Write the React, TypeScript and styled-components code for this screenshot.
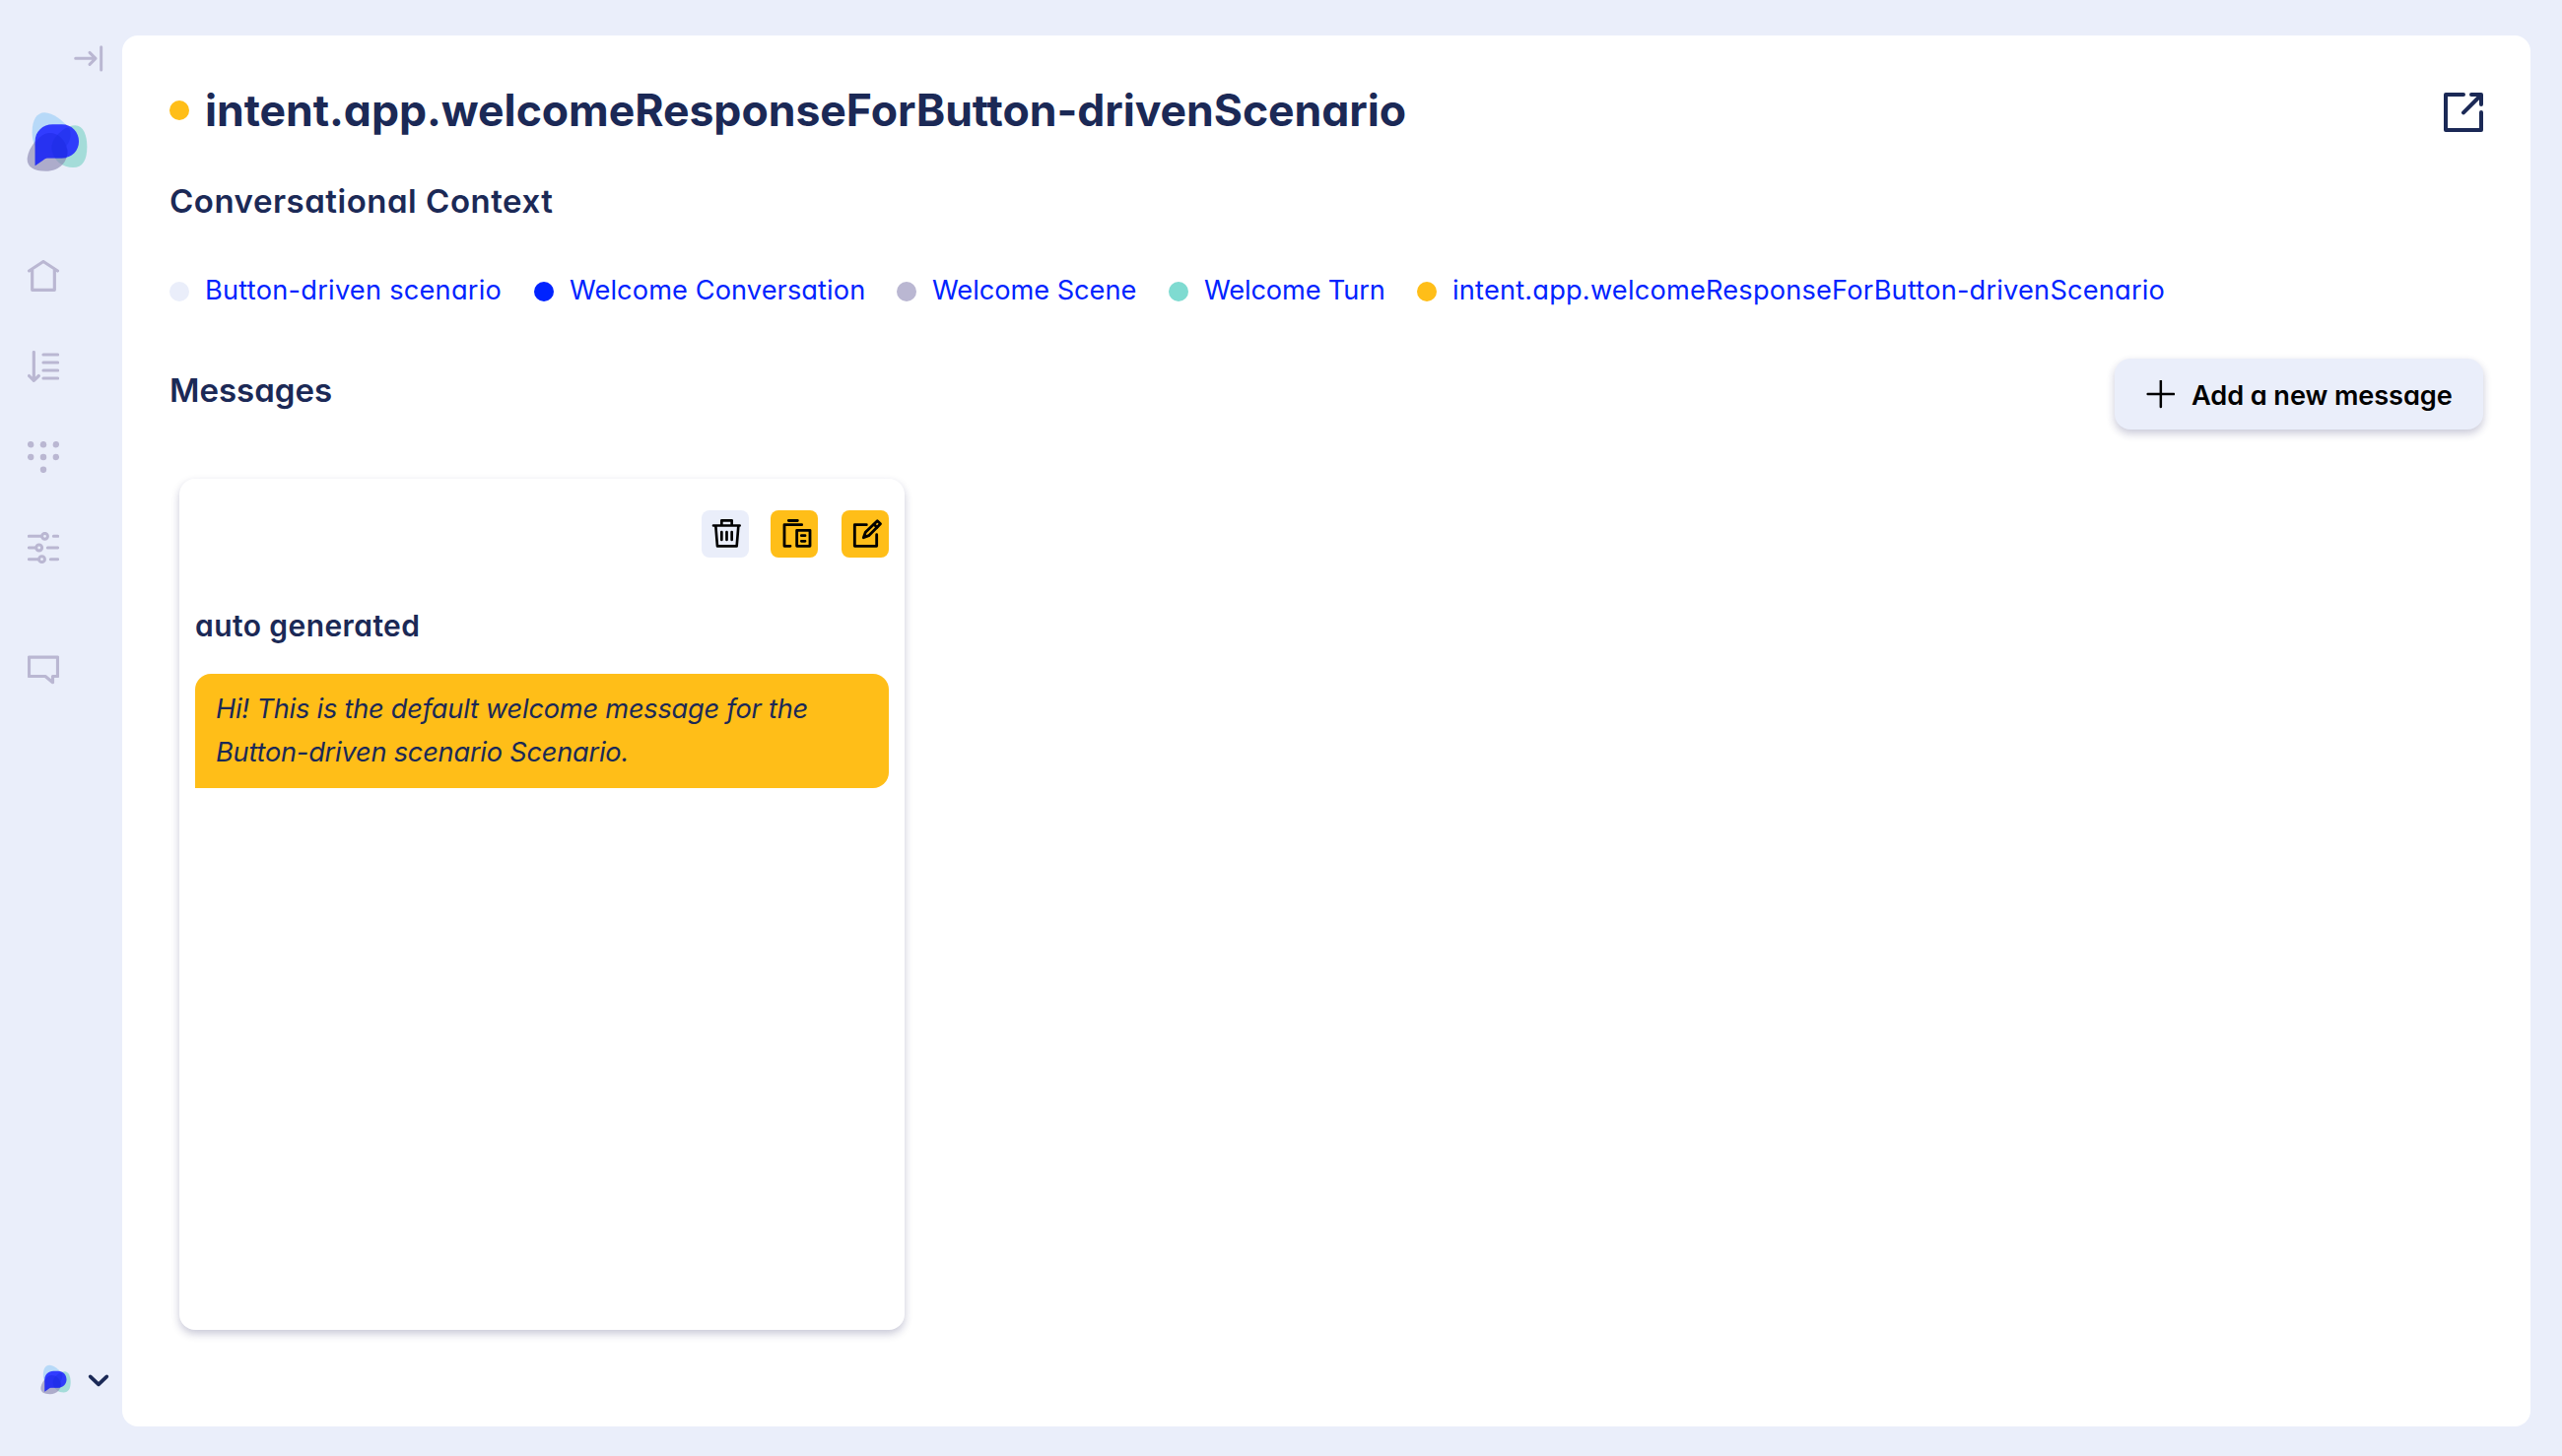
import React from "react";
import styled, { createGlobalStyle } from "styled-components";

const color = {
  mist: "#eaeefa",
  navy: "#1b2956",
  blue: "#0023ff",
  lilac: "#bab7d2",
  teal: "#7fdbd1",
  amber: "#ffbe18",
};

const GlobalStyle = createGlobalStyle`
  *, *::before, *::after { box-sizing: border-box; }
  body {
    margin: 0;
    background: ${color.mist};
    color: ${color.navy};
    font-family: Inter, "Liberation Sans", sans-serif;
    font-feature-settings: "cv11";
  }
  svg { display: block; }
`;

const Shell = styled.div`
  display: flex;
  height: 100vh;
  min-height: 1478px;
  padding: 36px 32px 30px 0;
`;

const Sidebar = styled.aside`
  flex: 0 0 124px;
  display: flex;
  flex-direction: column;
  padding-bottom: 32px;
`;

const CollapseButton = styled.div`
  display: flex;
  justify-content: flex-end;
  padding: 9px 18px 0 0;
`;

const LogoSlot = styled.div`
  padding: 40px 0 0 27px;
`;

const Nav = styled.nav`
  display: flex;
  flex-direction: column;
  gap: 60px;
  padding: 89px 0 0 28px;
`;

const NavItem = styled.a<{ $separated?: boolean }>`
  display: block;
  width: 32px;
  height: 32px;
  margin-top: ${(p) => (p.$separated ? "32px" : "0")};
`;

const Account = styled.div`
  display: flex;
  align-items: center;
  gap: 17px;
  margin-top: auto;
  padding-left: 41px;
`;

const Panel = styled.main`
  flex: 1;
  min-width: 0;
  padding: 46px 48px;
  background: #fff;
  border-radius: 16px;
`;

const SpreadRow = styled.header<{ $top: number; $height: number }>`
  display: flex;
  align-items: center;
  justify-content: space-between;
  height: ${(p) => p.$height}px;
  margin-top: ${(p) => p.$top}px;
`;

const TitleGroup = styled.div`
  display: flex;
  align-items: center;
  gap: 16px;
`;

const Dot = styled.span<{ $color: string }>`
  flex: none;
  width: 20px;
  height: 20px;
  border-radius: 50%;
  background: ${(p) => p.$color};
`;

const PageTitle = styled.h1`
  margin: 0;
  font-size: 44.6px;
  font-weight: 700;
  line-height: 60px;
  letter-spacing: -0.06px;
  white-space: nowrap;
`;

const ExternalLink = styled.a`
  padding-top: 4px;
`;

const SectionTitle = styled.h2<{ $top?: number; $bottom?: number; $spacing: string }>`
  margin: ${(p) => p.$top ?? 0}px 0 0;
  padding-bottom: ${(p) => p.$bottom ?? 0}px;
  font-size: 33px;
  font-weight: 600;
  line-height: 44px;
  letter-spacing: ${(p) => p.$spacing};
`;

const Crumbs = styled.nav`
  display: flex;
  align-items: center;
  gap: 32px;
  height: 36px;
  margin-top: 52px;
`;

const Crumb = styled.div<{ $width: number }>`
  display: flex;
  align-items: center;
  gap: 16px;
  width: ${(p) => p.$width}px;
`;

const CrumbLink = styled.a<{ $spacing: string }>`
  padding-bottom: 2px;
  color: ${color.blue};
  font-size: 27.2px;
  line-height: 36px;
  letter-spacing: ${(p) => p.$spacing};
  white-space: nowrap;
`;

const AddButton = styled.button`
  display: flex;
  align-items: center;
  gap: 17px;
  width: 374px;
  height: 72px;
  padding: 0 0 0 32px;
  border: 0;
  border-radius: 16px;
  background: ${color.mist};
  box-shadow: 0 4px 8px rgba(27, 27, 86, 0.24);
  color: #000;
  font-family: inherit;
  font-feature-settings: inherit;
`;

const AddLabel = styled.span`
  padding-top: 4px;
  font-size: 27.2px;
  font-weight: 600;
  line-height: 36px;
  letter-spacing: -0.1px;
  white-space: nowrap;
`;

const Card = styled.article`
  width: 736px;
  height: 864px;
  margin: 50px 0 0 10px;
  padding: 32px 16px;
  border-radius: 16px;
  background: #fff;
  box-shadow: 0 4px 8px rgba(27, 27, 86, 0.24);
`;

const CardActions = styled.div`
  display: flex;
  justify-content: flex-end;
  gap: 24px;
`;

const ActionButton = styled.button<{ $tone: string; $pull?: number }>`
  width: 48px;
  height: 48px;
  margin: 0 ${(p) => -(p.$pull ?? 0)}px 0 0;
  padding: 0;
  border: 0;
  border-radius: 8px;
  background: ${(p) => p.$tone};
`;

const CardTitle = styled.h3`
  margin: 48px 0 28px;
  font-size: 30px;
  font-weight: 600;
  line-height: 42px;
  letter-spacing: 0.42px;
`;

const Bubble = styled.p`
  height: 116px;
  margin: 0;
  padding: 14px 20px 14px 21px;
  border-radius: 16px 16px 16px 0;
  background: ${color.amber};
  font-size: 27.2px;
  font-style: italic;
  line-height: 44px;
  letter-spacing: -0.22px;
`;

const Glyph = styled.svg<{ $stroke: string; $weight: number }>`
  fill: none;
  stroke: ${(p) => p.$stroke};
  stroke-width: ${(p) => p.$weight};
  stroke-linecap: round;
  stroke-linejoin: round;
`;

function Logo({ size }: { size: number }) {
  return (
    <svg width={size} height={size} viewBox="82 280 187 183">
      <path fill="#b7d9f8" d="M99 342C99 305 113 282 137 282C163 282 193 308 208 325C222 345 218 370 202 386C180 407 137 408 116 394C104 385 99 364 99 342Z" />
      <path fill="#7fd3c8" fillOpacity=".66" d="M230 321C256 321 267 352 267 387C267 426 254 450 224 450C193 450 163 429 159 394C157 370 172 351 195 334C206 326 218 321 230 321Z" />
      <path fill="#8a86b0" fillOpacity=".64" d="M152 344C180 344 201 366 206 393C211 429 185 461 140 461C104 461 84 448 84 425C84 396 118 344 152 344Z" />
      <path fill="#1f26ff" fillOpacity=".88" d="M108 445V370C108 340 131 318 162 318H190C221 318 242 342 242 370C242 398 221 421 190 421H149C142 421 138 423 133 427Z" />
      <path fill="#1a2ae0" fillOpacity=".32" d="M110 375C122 355 137 344 152 344C180 344 201 366 206 393C208 405 207 413 203 421H149C142 421 138 423 133 427L108 445V378Z" />
      <path fill="#1a2ae0" fillOpacity=".32" d="M213 331C219 345 218 368 202 386L206 393C208 405 207 413 203 421H170C164 413 160 404 159 394C157 370 172 351 195 334C201 330 208 326 213 331Z" />
    </svg>
  );
}

const CollapseIcon = () => (
  <Glyph $stroke={color.lilac} $weight={9} width={31} height={28} viewBox="225 75 93 84">
    <path d="M230 118H291M273 100L291 118L273 136M308 83V153" />
  </Glyph>
);

const HomeIcon = () => (
  <Glyph $stroke={color.lilac} $weight={9.5} width={32} height={32} viewBox="84 72 96 96">
    <path d="M88.500 105L132 76.500L175.500 105M98 102V163H166V102" />
  </Glyph>
);

const SortIcon = () => (
  <Glyph $stroke={color.lilac} $weight={9.5} width={32} height={32} viewBox="84 348 96 96">
    <path d="M103 352.500V438M88.500 424.500L103 439L118 424.500M132 360H175.500M132 384H175.500M132 408H175.500M132 432H175.500" />
  </Glyph>
);

const DotsIcon = () => (
  <svg width={32} height={32} viewBox="84 624 96 96" fill={color.lilac}>
    {[[93.5, 633.5], [132, 633.5], [170.5, 633.5], [93.5, 672], [132, 672], [170.5, 672], [132, 710.5]].map(([x, y]) => (
      <circle key={`${x}-${y}`} cx={x} cy={y} r={9.7} />
    ))}
  </svg>
);

const SlidersIcon = () => (
  <Glyph $stroke={color.lilac} $weight={9} width={32} height={32} viewBox="84 180 96 96">
    <path d="M88 193H127M163 193H176M88 228H109M145 228H176M88 263H118M154 263H176" />
    <circle cx={136.500} cy={193} r={8.800} />
    <circle cx={119} cy={228} r={8.800} />
    <circle cx={127.500} cy={263} r={8.800} />
  </Glyph>
);

const ChatIcon = () => (
  <Glyph $stroke={color.lilac} $weight={9.5} width={32} height={32} viewBox="84 552 96 96">
    <path d="M88.500 561.500H175.500V619.500H160.500V638L138 619.500H88.500Z" />
  </Glyph>
);

const ChevronIcon = () => (
  <Glyph $stroke={color.navy} $weight={11} width={22} height={16} viewBox="267 98 66 48">
    <path d="M275 111L300 135L325 111" />
  </Glyph>
);

const ExternalIcon = () => (
  <Glyph $stroke={color.navy} $weight={12} width={40} height={40} viewBox="1080 223 120 120">
    <path d="M1140 229H1086V337H1194V283M1164 229H1194V259M1140 284L1192 232" />
  </Glyph>
);

const PlusIcon = () => (
  <Glyph $stroke="#000" $weight={7.5} width={29} height={29} viewBox="175 1098 87 87">
    <path d="M180 1140H259.500M219.500 1100V1179" />
  </Glyph>
);

const TrashIcon = () => (
  <Glyph $stroke="#000" $weight={8} width={48} height={48} viewBox="66 54 144 144">
    <path d="M102 100.500H182M127 99V85H158V99M109 102L114 163H173L178 102M127 120V144M142.500 120V144M158 120V144" />
  </Glyph>
);

const CopyIcon = () => (
  <Glyph $stroke="#000" $weight={8.5} width={48} height={48} viewBox="276 54 144 144">
    <path d="M331 85.500H358M371 98H318V163H336M356 115H396V163H356ZM370 131H381M370 148H381" />
  </Glyph>
);

const EditIcon = () => (
  <Glyph $stroke="#000" $weight={8.5} width={48} height={48} viewBox="492 54 144 144">
    <path d="M568 98H532V163H599V128" />
    <path d="M601 86L610.500 95L575 131L559 137L565 121Z" />
    <path d="M591 97L600 106" />
  </Glyph>
);

const crumbs = [
  { label: "Button-driven scenario", dot: color.mist, width: 338, spacing: "0.24px" },
  { label: "Welcome Conversation", dot: color.blue, width: 336, spacing: "0.09px" },
  { label: "Welcome Scene", dot: color.lilac, width: 244, spacing: "-0.04px" },
  { label: "Welcome Turn", dot: color.teal, width: 220, spacing: "-0.14px" },
  { label: "intent.app.welcomeResponseForButton-drivenScenario", dot: color.amber, width: 760, spacing: "0.2px" },
];

export default function App() {
  return (
    <>
      <GlobalStyle />
      <Shell>
        <Sidebar>
          <CollapseButton>
            <CollapseIcon />
          </CollapseButton>
          <LogoSlot>
            <Logo size={62} />
          </LogoSlot>
          <Nav>
            <NavItem><HomeIcon /></NavItem>
            <NavItem><SortIcon /></NavItem>
            <NavItem><DotsIcon /></NavItem>
            <NavItem><SlidersIcon /></NavItem>
            <NavItem $separated><ChatIcon /></NavItem>
          </Nav>
          <Account>
            <Logo size={31} />
            <ChevronIcon />
          </Account>
        </Sidebar>
        <Panel>
          <SpreadRow $top={0} $height={60}>
            <TitleGroup>
              <Dot $color={color.amber} />
              <PageTitle>intent.app.welcomeResponseForButton-drivenScenario</PageTitle>
            </TitleGroup>
            <ExternalLink><ExternalIcon /></ExternalLink>
          </SpreadRow>
          <SectionTitle $top={40} $spacing="0.52px">Conversational Context</SectionTitle>
          <Crumbs>
            {crumbs.map((c) => (
              <Crumb key={c.label} $width={c.width}>
                <Dot $color={c.dot} />
                <CrumbLink $spacing={c.spacing}>{c.label}</CrumbLink>
              </Crumb>
            ))}
          </Crumbs>
          <SpreadRow $top={50} $height={72}>
            <SectionTitle $bottom={8} $spacing="0px">Messages</SectionTitle>
            <AddButton>
              <PlusIcon />
              <AddLabel>Add a new message</AddLabel>
            </AddButton>
          </SpreadRow>
          <Card>
            <CardActions>
              <ActionButton $tone={color.mist} $pull={2}><TrashIcon /></ActionButton>
              <ActionButton $tone={color.amber}><CopyIcon /></ActionButton>
              <ActionButton $tone={color.amber}><EditIcon /></ActionButton>
            </CardActions>
            <CardTitle>auto generated</CardTitle>
            <Bubble>
              Hi! This is the default welcome message for the Button-driven scenario Scenario.
            </Bubble>
          </Card>
        </Panel>
      </Shell>
    </>
  );
}
